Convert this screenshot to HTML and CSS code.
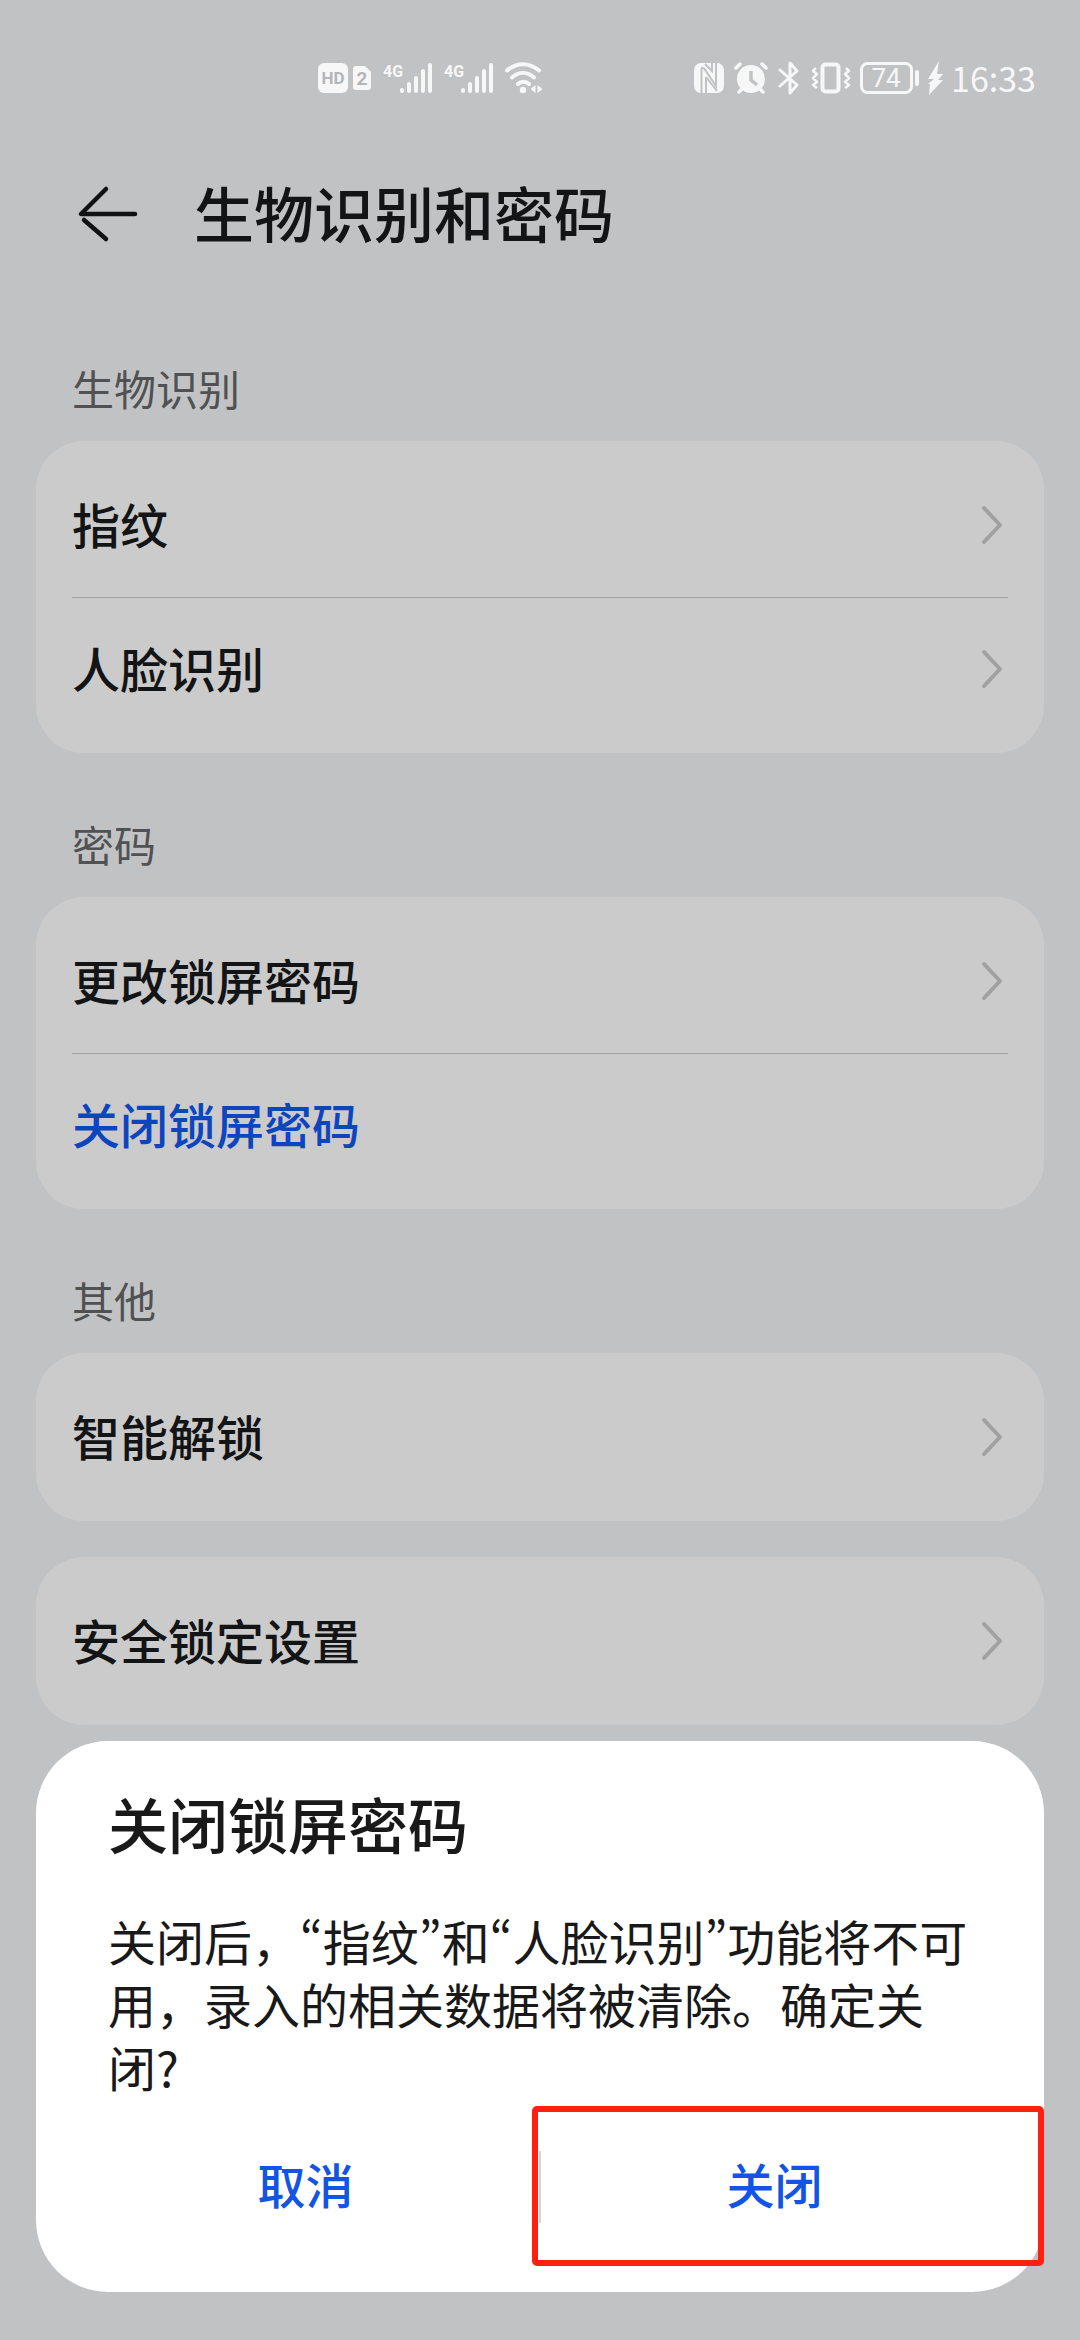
FILE: index.html
```html
<!DOCTYPE html>
<html lang="zh-CN">
<head>
<meta charset="utf-8">
<meta name="viewport" content="width=device-width, initial-scale=1">
<title>生物识别和密码</title>
<link rel="stylesheet" href="styles.css">
</head>
<body>
<div class="page">
  <div class="status">
    <div class="status-left">
      <svg class="icon" width="54" height="32" viewBox="0 0 54 32">
        <rect x="0" y="1" width="30" height="30" rx="6" fill="#f7f7f7"/>
        <path d="M35 7a3 3 0 0 1 3-3h9l6 6v15a3 3 0 0 1-3 3H38a3 3 0 0 1-3-3z" fill="#f7f7f7"/>
        <text x="15" y="22" class="badge-hd">HD</text>
        <text x="44" y="23" class="badge-sim">2</text>
      </svg>
      <svg class="icon" width="50" height="32" viewBox="0 0 50 32">
        <text x="0" y="15" class="net">4G</text>
        <g stroke="#f7f7f7" stroke-width="4" stroke-linecap="round">
          <path d="M19 28v1M26 22v7M33 16v13M40 9v20M47 3v26"/>
        </g>
      </svg>
      <svg class="icon" width="50" height="32" viewBox="0 0 50 32">
        <text x="0" y="15" class="net">4G</text>
        <g stroke="#f7f7f7" stroke-width="4" stroke-linecap="round">
          <path d="M19 28v1M26 22v7M33 16v13M40 9v20M47 3v26"/>
        </g>
      </svg>
      <svg class="icon" width="38" height="32" viewBox="0 0 38 32">
        <g fill="none" stroke="#f7f7f7" stroke-width="4" stroke-linecap="round">
          <path d="M2 8.500C12 0 24 0 34 8.500M7 15.500c7-6 15-6 22 0M13 22c3-3 8-3 11 0"/>
        </g>
        <circle cx="18" cy="28" r="3.200" fill="#f7f7f7"/>
        <path d="M30.500 23v8L25.500 27zM32.500 23v8l5-4z" fill="#f7f7f7"/>
      </svg>
    </div>
    <div class="status-right">
      <svg class="icon" width="32" height="32" viewBox="-1 0 32 32">
        <rect x="0" y="1" width="30" height="30" rx="7" fill="#f7f7f7"/>
        <path d="M7.500 31V8q0-4 3-1L22 24V1M12 15v16M12 15l11 14M18 1v8l-7-7" fill="none" stroke="#c1c2c4" stroke-width="2"/>
      </svg>
      <svg class="icon" width="36" height="32" viewBox="-1 0 36 32">
        <circle cx="17" cy="17" r="14" fill="#f7f7f7"/>
        <g fill="none" stroke="#f7f7f7" stroke-width="3.500" stroke-linecap="round">
          <path d="M2 6l4-4M32 6l-4-4M5 30l3-3M29 30l-3-3"/>
        </g>
        <path d="M17 9v9l6 5" fill="none" stroke="#c1c2c4" stroke-width="3.500"/>
      </svg>
      <svg class="icon" width="26" height="34" viewBox="-1 0 26 34">
        <path d="M2 9l17 15-7 8V2l7 8L2 25" fill="none" stroke="#f7f7f7" stroke-width="3" stroke-linecap="round" stroke-linejoin="round"/>
      </svg>
      <svg class="icon" width="40" height="32" viewBox="0 0 40 32">
        <rect x="11.500" y="2.500" width="16" height="27" rx="3" fill="none" stroke="#f7f7f7" stroke-width="4"/>
        <path d="M5 6L2 9l4 3-4 4 4 4-4 3 4 3M35 6l3 3-4 3 4 4-4 4 4 3-4 3" fill="none" stroke="#f7f7f7" stroke-width="2.500" stroke-linejoin="round"/>
      </svg>
      <svg class="icon" width="60" height="32" viewBox="-1 0 60 32">
        <rect x="1.500" y="1.500" width="50" height="29" rx="6" fill="none" stroke="#f7f7f7" stroke-width="3"/>
        <path d="M57 10v12" stroke="#f7f7f7" stroke-width="4" stroke-linecap="round"/>
        <text x="26" y="25" class="battery">74</text>
      </svg>
      <svg class="icon" width="16" height="34" viewBox="0 0 16 34">
        <path d="M12 0L1 18h6L1 23h2L2 34 16 19h-5l5-6h-6z" fill="#f7f7f7"/>
      </svg>
      <span class="clock">16:33</span>
    </div>
  </div>

  <header class="topbar">
    <button class="back" type="button" aria-label="返回">
      <svg class="icon" width="60" height="56" viewBox="0 0 60 56">
        <path d="M28 3L3 28h54M6 34l22 19" fill="none" stroke="#111213" stroke-width="4.500" stroke-linecap="round" stroke-linejoin="round"/>
      </svg>
    </button>
    <h1 class="title">生物识别和密码</h1>
  </header>

  <main class="content">
    <h2 class="label">生物识别</h2>
    <section class="card">
      <a class="row" href="#fingerprint"><span class="row-text">指纹</span><svg class="icon" width="20" height="40" viewBox="0 0 20 40"><path d="M2 3l16 17L2 37" class="chevron"/></svg></a>
      <a class="row" href="#face"><span class="row-text">人脸识别</span><svg class="icon" width="20" height="40" viewBox="0 0 20 40"><path d="M2 3l16 17L2 37" class="chevron"/></svg></a>
    </section>

    <h2 class="label">密码</h2>
    <section class="card">
      <a class="row" href="#change"><span class="row-text">更改锁屏密码</span><svg class="icon" width="20" height="40" viewBox="0 0 20 40"><path d="M2 3l16 17L2 37" class="chevron"/></svg></a>
      <a class="row row-accent" href="#disable"><span class="row-text">关闭锁屏密码</span></a>
    </section>

    <h2 class="label">其他</h2>
    <section class="card">
      <a class="row" href="#smart"><span class="row-text">智能解锁</span><svg class="icon" width="20" height="40" viewBox="0 0 20 40"><path d="M2 3l16 17L2 37" class="chevron"/></svg></a>
    </section>
    <section class="card">
      <a class="row" href="#lock"><span class="row-text">安全锁定设置</span><svg class="icon" width="20" height="40" viewBox="0 0 20 40"><path d="M2 3l16 17L2 37" class="chevron"/></svg></a>
    </section>
  </main>
</div>

<div class="dialog" role="dialog" aria-labelledby="dialog-title">
  <h2 class="dialog-title" id="dialog-title">关闭锁屏密码</h2>
  <p class="dialog-text">关闭后，<span class="q">“</span>指纹<span class="q">”</span>和<span class="q">“</span>人脸识别<span class="q">”</span>功能将不可用，录入的相关数据将被清除。确定关闭?</p>
  <div class="actions">
    <button class="action" type="button">取消</button>
    <span class="separator"></span>
    <button class="action" type="button">关闭</button>
  </div>
  <div class="highlight"></div>
</div>
</body>
</html>
```

FILE: styles.css
```css
* {
  box-sizing: border-box;
}

body {
  margin: 0;
  min-height: 100vh;
  background: #c1c2c4;
  color: #131415;
  font-family: "Noto Sans CJK SC", "Noto Sans", sans-serif;
}

h1,
h2,
p {
  margin: 0;
}

button {
  padding: 0;
  border: 0;
  background: none;
  color: inherit;
  font: inherit;
}

.icon {
  display: block;
  flex: none;
  overflow: visible;
}

.status {
  display: flex;
  justify-content: space-between;
  align-items: center;
  height: 156px;
  padding: 0 44px 0 318px;
}

.status-left,
.status-right {
  display: flex;
  align-items: center;
}

.status-left {
  gap: 11px;
}

.status-right {
  gap: 8px;
}

.clock {
  color: #f7f7f7;
  font-size: 34px;
  line-height: 40px;
}

.badge-hd,
.badge-sim,
.battery {
  font-family: Roboto, sans-serif;
}

.badge-hd,
.badge-sim {
  fill: #b4b5b7;
  font-weight: 700;
  text-anchor: middle;
}

.badge-hd {
  font-size: 17px;
}

.badge-sim {
  font-size: 19px;
}

.net {
  fill: #f7f7f7;
  font-family: "Liberation Sans Narrow", Roboto, sans-serif;
  font-size: 16px;
  font-weight: 700;
}

.battery {
  fill: #f7f7f7;
  font-size: 26px;
  text-anchor: middle;
}

.topbar {
  display: flex;
  align-items: center;
  gap: 56px;
  height: 116px;
  padding: 0 78px;
}

.title {
  padding-bottom: 4px;
  font-size: 60px;
  font-weight: 500;
  line-height: 72px;
}

.content {
  padding: 0 36px;
}

.label {
  padding: 84px 36px 21px;
  color: #505153;
  font-size: 42px;
  font-weight: 400;
  line-height: 64px;
}

.card {
  padding: 12px 36px;
  border-radius: 48px;
  background: #cbcbcb;
}

.card + .card {
  margin-top: 36px;
}

.card + .label {
  padding-top: 59px;
}

.row {
  display: flex;
  justify-content: space-between;
  align-items: center;
  height: 144px;
  padding-right: 6px;
  color: inherit;
  font-size: 48px;
  font-weight: 500;
  text-decoration: none;
}

.row-text {
  padding-bottom: 4px;
}

.row + .row {
  box-shadow: inset 0 1px #a3a3a3;
}

.row-accent {
  color: #0d45bf;
}

.chevron {
  fill: none;
  stroke: #a1a1a1;
  stroke-width: 4px;
  stroke-linecap: round;
  stroke-linejoin: round;
}

.dialog {
  position: fixed;
  right: 36px;
  bottom: 48px;
  left: 36px;
  padding: 46px 36px 45px;
  border-radius: 72px;
  background: #fff;
  color: #191919;
}

.dialog-title {
  padding: 0 36px;
  font-size: 60px;
  font-weight: 500;
  line-height: 72px;
}

.dialog-text {
  padding: 50px 36px 0;
  font-size: 48px;
  line-height: 63px;
}

.q {
  font-feature-settings: "pwid";
}

.actions {
  display: flex;
  align-items: center;
  margin-top: 29px;
}

.action {
  flex: 1;
  height: 120px;
  padding-bottom: 8px;
  color: #1254e3;
  font-size: 48px;
  font-weight: 500;
}

.separator {
  width: 2px;
  height: 72px;
  background: #d9d0d0;
}

.highlight {
  position: absolute;
  right: 0;
  bottom: 26px;
  left: calc(50% - 8px);
  height: 160px;
  border: 6px solid #ff2012;
  border-radius: 5px;
  pointer-events: none;
}
```
